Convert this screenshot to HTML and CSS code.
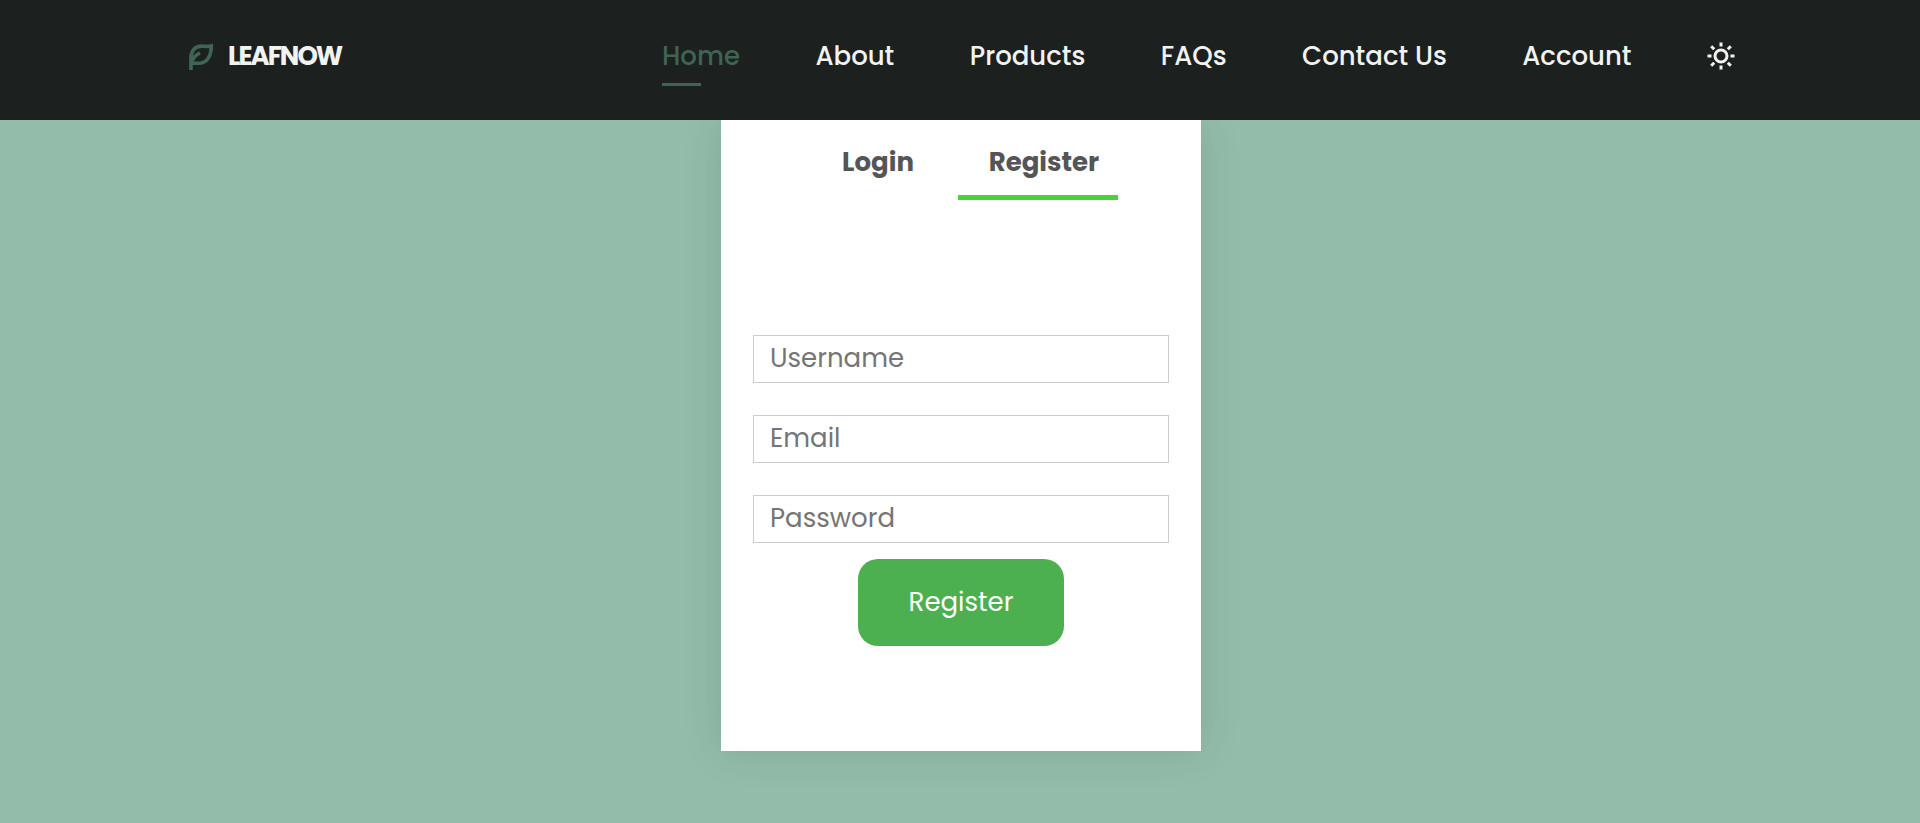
FILE: index.html
```html
<!DOCTYPE html>
<html lang="en">
<head>
<meta charset="utf-8">
<title>LeafNow</title>
<meta name="viewport" content="width=device-width, initial-scale=1">
<link rel="stylesheet" href="styles.css">
</head>
<body>
<header class="header">
  <a class="logo" href="#">
    <svg class="logo-icon" viewBox="0 0 24 26" fill="none" stroke="currentColor" stroke-width="3.500" aria-hidden="true">
      <path d="M2.800 26V15C2.800 7 7 3 13 3C16 3.100 19 3.700 22.300 2.800C22.500 13 18 19.500 10.500 19.500H3"/>
      <path d="M3.500 18C4.800 14 7.500 11.500 11.500 9.500"/>
    </svg>
    <span class="logo-text">LEAFNOW</span>
  </a>
  <nav class="nav">
    <a class="nav-link nav-link-active" href="#">Home</a>
    <a class="nav-link" href="#">About</a>
    <a class="nav-link" href="#">Products</a>
    <a class="nav-link" href="#">FAQs</a>
    <a class="nav-link" href="#">Contact Us</a>
    <a class="nav-link" href="#">Account</a>
    <button class="theme-button" type="button" aria-label="Change theme">
      <svg class="theme-icon" viewBox="0 0 28 28" fill="none" stroke="currentColor" stroke-width="3" aria-hidden="true">
        <circle cx="14" cy="14" r="6"/>
        <path d="M14 0.500v4M14 23.500v4M0.500 14h4M23.500 14h4M4.200 4.200l3 3M20.800 20.800l3 3M4.200 23.800l3-3M20.800 7.200l3-3"/>
      </svg>
    </button>
  </nav>
</header>
<main class="main">
  <section class="card">
    <div class="tabs">
      <button class="tab" type="button">Login</button>
      <button class="tab tab-active" type="button">Register</button>
    </div>
    <form class="form">
      <input class="field" type="text" placeholder="Username" aria-label="Username">
      <input class="field" type="email" placeholder="Email" aria-label="Email">
      <input class="field" type="password" placeholder="Password" aria-label="Password">
      <button class="submit" type="button">Register</button>
    </form>
  </section>
</main>
</body>
</html>
```

FILE: styles.css
```css
* {
  box-sizing: border-box;
}

body {
  margin: 0;
  min-height: 100vh;
  background: #93bcaa;
  font-family: Poppins, Inter, sans-serif;
  font-size: 26px;
}

button,
input {
  font: inherit;
}

.header {
  position: relative;
  z-index: 1;
  display: flex;
  align-items: center;
  justify-content: space-between;
  padding: 31px 185px 29px 188px;
  height: 120px;
  background: #1c201f;
}

.logo {
  display: flex;
  align-items: center;
  gap: 15px;
  margin-bottom: 10px;
  color: #f1f3f2;
  text-decoration: none;
}

.logo-icon {
  width: 25px;
  height: 27px;
  color: #3e6553;
}

.logo-text {
  font-weight: 700;
  letter-spacing: -2px;
}

.nav {
  display: flex;
  align-items: center;
  justify-content: space-between;
  width: 1073px;
  margin-bottom: 10px;
}

.nav-link {
  position: relative;
  line-height: 40px;
  color: #f1f3f2;
  font-weight: 500;
  text-decoration: none;
}

.nav-link-active {
  color: #3e6553;
}

.nav-link-active::after {
  content: "";
  position: absolute;
  left: 0;
  bottom: -10px;
  width: 50%;
  height: 3px;
  background: #3e6553;
}

.theme-button {
  display: flex;
  padding: 0;
  border: 0;
  background: none;
  color: #f1f3f2;
}

.theme-icon {
  width: 28px;
  height: 28px;
}

.main {
  display: flex;
  justify-content: center;
  padding: 0 16px 72px 18px;
}

.card {
  width: 480px;
  padding: 0 32px 105px;
  background: #fff;
  box-shadow: 0 0 40px rgba(0, 0, 0, 0.1);
}

.tabs {
  display: flex;
  justify-content: center;
  margin-right: 6px;
}

.tab {
  width: 160px;
  height: 80px;
  padding: 10px 0 0;
  border: 0;
  border-bottom: 5px solid transparent;
  background: none;
  color: #555;
  font-weight: 700;
}

.tab-active {
  padding-left: 12px;
  border-bottom-color: #44d638;
}

.form {
  display: flex;
  flex-direction: column;
  gap: 32px;
  padding-top: 135px;
}

.field {
  width: 100%;
  height: 48px;
  padding: 0 16px 2px;
  border: 1px solid #ccc;
  border-radius: 0;
  background: #fff;
}

.field::placeholder {
  color: #757575;
}

.submit {
  align-self: center;
  width: 206px;
  height: 87px;
  margin-top: -16px;
  border: 0;
  border-radius: 20px;
  background: #4caf50;
  color: #fff;
}
```
